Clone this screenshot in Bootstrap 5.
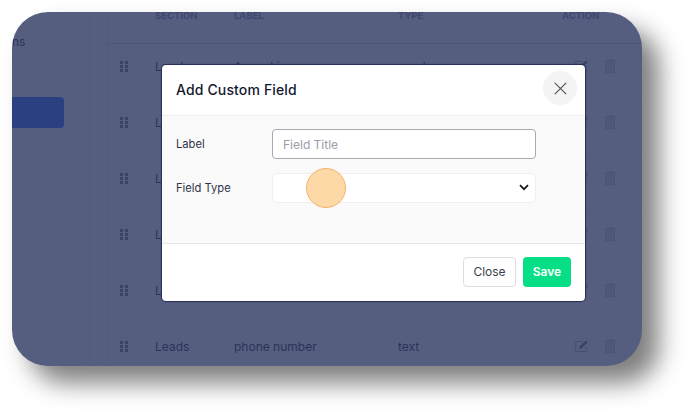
<!DOCTYPE html>
<html lang="en">
<head>
    <meta charset="UTF-8">
    <meta name="viewport" content="width=device-width, initial-scale=1.0">
    <title>Add Custom Field</title>

    <!-- Bootstrap CSS -->
    <link href="https://cdn.jsdelivr.net/npm/bootstrap@5.3.0/dist/css/bootstrap.min.css" rel="stylesheet">
    <style>
        html, body { height: 100%; }
        body { background: #fff; font-family: Inter, "Liberation Sans", sans-serif; overflow: hidden; }

        .shot-frame { width: 630px; height: 354px; margin: 12px; border-radius: 36px; background: #565e80; box-shadow: 17px 17px 24px rgba(0, 0, 0, .5); overflow: hidden; position: relative; }
        .shot-side { width: 78px; color: #2c3358; font-size: 12px; border-right: 1px solid #525a7d; }
        .side-text { padding-top: 22px; line-height: 15px; height: 85px; }
        .side-active { width: 52px; height: 31px; background: #2a4080; border-radius: 0 4px 4px 0; }
        .shot-main { margin-left: 17px; border-left: 1px solid #525a7d; }

        .field-table { width: 534px; margin: -3px 0 0; table-layout: fixed; --bs-table-bg: transparent; --bs-table-color: #2c3358; --bs-table-border-color: #525a7d; }
        .field-table th { height: 34px; padding: 0 12px 23px; font-size: 9.5px; line-height: 9px; font-weight: 700; color: #3f4770; border-bottom: 1px solid #4f5779; }
        .field-table td { height: 56px; padding: 0 12px 8px; font-size: 12px; line-height: 16px; vertical-align: middle; }
        .grip-col { width: 35px; }
        .section-col { width: 79px; }
        .label-col { width: 164px; }
        .type-col { width: 164px; }
        .grip-icon { display: block; margin-top: -2px; }
        .action-icons { display: flex; align-items: center; gap: 15px; padding-left: 13px; margin-top: -2px; }

        .field-modal { position: absolute; left: 150px; top: 53px; width: 423px; height: 236px; background: #fff; border: 0; border-radius: 4px; box-shadow: 0 0 1px 1px #262c55; font-family: Inter, "Liberation Sans", sans-serif; }
        .field-modal .modal-header { height: 51px; padding: 0 8px 0 14px; border-bottom: 1px solid #eeeeee; }
        .field-modal .modal-title { font-size: 14px; line-height: 20px; font-weight: 450; color: #14182f; letter-spacing: .14px; }
        .close-round { width: 34px; height: 34px; padding: 0; margin-top: -4px; border: 0; border-radius: 50%; background: #f4f4f4; display: flex; align-items: center; justify-content: center; }
        .field-modal .modal-body { height: 127px; flex: none; padding: 13px 49px 0 14px; background: #fafafa; }
        .field-row { display: flex; align-items: center; height: 30px; margin-bottom: 14px; }
        .field-name { width: 96px; padding-top: 1px; font-size: 11.2px; color: #30344a; }
        .field-modal .form-control, .field-modal .form-select { flex: 1; height: 30px; min-height: 30px; padding: 0 10px; font-size: 12px; border-radius: 4px; box-shadow: none; }
        .field-modal .form-control { border: 1px solid #a9a9b4; }
        .field-modal .form-control::placeholder { color: #9a9ca8; }
        .field-modal .form-select { border: 1px solid #f0f0f0; background-image: none; }
        .field-modal .modal-footer { height: 58px; padding: 0 14px 1px; border-top: 1px solid #e8e8e8; gap: 7px; }
        .field-modal .modal-footer > * { margin: 0; }
        .btn-close-alt { width: 53px; height: 30px; padding: 0; font-size: 12px; color: #3c3f4c; background: #fff; border: 1px solid #dedede; border-radius: 4px; }
        .btn-save { width: 48px; height: 30px; padding: 0; font-size: 12px; font-weight: 600; color: #fff; background: #06df86; border: 0; border-radius: 4px; }
        .select-chevron { position: absolute; left: 357px; top: 119px; pointer-events: none; }
        .click-dot { position: absolute; left: 144px; top: 103px; width: 40px; height: 40px; border-radius: 50%; background: #fdd9a8; border: 1px solid #f6b26b; }
    </style>
</head>
<body>

    <div class="shot-frame d-flex">
        <div class="shot-side flex-shrink-0">
            <div class="side-text">ns</div>
            <div class="side-active"></div>
        </div>

        <div class="shot-main flex-grow-1">
            <table class="table field-table">
                <thead>
                    <tr>
                        <th class="grip-col"></th>
                        <th class="section-col">SECTION</th>
                        <th class="label-col">LABEL</th>
                        <th class="type-col">TYPE</th>
                        <th>ACTION</th>
                    </tr>
                </thead>
                <tbody id="fieldRows"></tbody>
            </table>
        </div>

        <div class="modal-content field-modal">
            <div class="modal-header">
                <h5 class="modal-title">Add Custom Field</h5>
                <button type="button" class="close-round ms-auto" aria-label="Close">
                    <svg width="13" height="13" viewBox="0 0 13 13"><path d="M.8 .8L12.2 12.2M12.2 .8L.8 12.2" stroke="#55565c" stroke-width="1.2" fill="none"/></svg>
                </button>
            </div>
            <div class="modal-body">
                <div class="field-row">
                    <label class="field-name">Label</label>
                    <input type="text" class="form-control" placeholder="Field Title">
                </div>
                <div class="field-row">
                    <label class="field-name">Field Type</label>
                    <select class="form-select"><option></option></select>
                </div>
            </div>
            <div class="modal-footer">
                <button type="button" class="btn btn-close-alt">Close</button>
                <button type="button" class="btn btn-save">Save</button>
            </div>
            <svg class="select-chevron" width="10" height="7" viewBox="0 0 10 7"><path d="M1 1.2L5 5.2L9 1.2" stroke="#15171f" stroke-width="1.7" fill="none"/></svg>
            <div class="click-dot"></div>
        </div>
    </div>

    <!-- Bootstrap JS -->
    <script src="https://cdn.jsdelivr.net/npm/bootstrap@5.3.0/dist/js/bootstrap.bundle.min.js"></script>

    <script>
        const fields = [
            ['Leads', 'Annual income', 'number'],
            ['Leads', 'Company', 'text'],
            ['Leads', 'Website', 'text'],
            ['Leads', 'Industry', 'text'],
            ['Leads', 'Address', 'text'],
            ['Leads', 'phone number', 'text']
        ];
        const grip = '<svg class="grip-icon" width="8" height="11" viewBox="0 0 8 11" fill="#3a4268"><rect width="3" height="3"/><rect x="5" width="3" height="3"/><rect y="4" width="3" height="3"/><rect x="5" y="4" width="3" height="3"/><rect y="8" width="3" height="3"/><rect x="5" y="8" width="3" height="3"/></svg>';
        const edit = '<svg width="14" height="14" viewBox="0 0 14 14" fill="none"><path d="M8 2.5H.7V12.5H11V7" stroke="#464e72"/><path d="M4 10L4.6 7.6L10.8 1.4L12.7 3.2L6.4 9.4Z" fill="#3a4268"/></svg>';
        const trash = '<svg width="12" height="14" viewBox="0 0 12 14" fill="#4b5377"><rect x="3.5" y="0" width="5" height="1.2"/><rect x="0" y="1.5" width="12" height="1.4"/><path d="M1.2 3.6H10.8V14H1.2ZM3.2 5V12.5H4.2V5ZM5.5 5V12.5H6.5V5ZM7.8 5V12.5H8.8V5Z" fill-rule="evenodd"/></svg>';

        document.getElementById('fieldRows').innerHTML = fields.map(row => `
            <tr>
                <td>${grip}</td>
                <td>${row[0]}</td>
                <td>${row[1]}</td>
                <td>${row[2]}</td>
                <td><div class="action-icons">${edit}${trash}</div></td>
            </tr>`).join('');
    </script>

</body>
</html>
